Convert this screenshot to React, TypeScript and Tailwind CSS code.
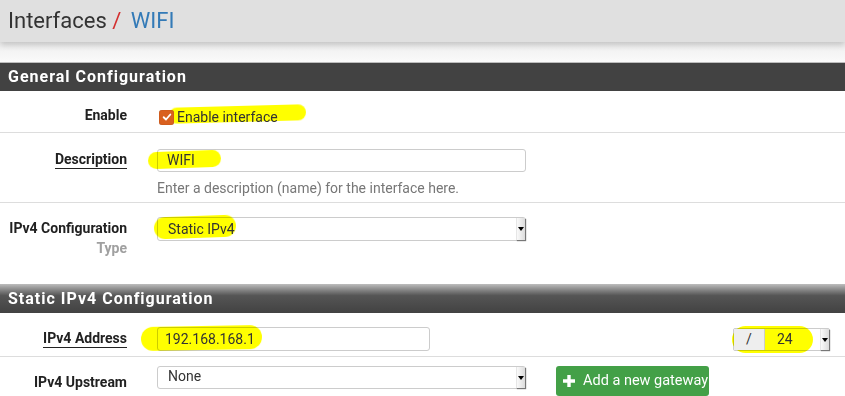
import React from "react";

const font = { fontFamily: "Roboto, 'Liberation Sans', sans-serif" };

function Mark({ className }: { className: string }) {
  return (
    <span
      className={`pointer-events-none absolute rounded-full bg-[#ffff00] mix-blend-multiply blur-[0.6px] ${className}`}
    />
  );
}

function SelectArrow() {
  return (
    <span className="absolute right-0 top-0 flex h-full w-[9px] items-center justify-center border-l border-[#e6e6e6] bg-gradient-to-r from-[#fafafa] to-[#dcdcdc] shadow-[1px_1px_1px_#777]">
      <span className="h-0 w-0 border-x-[3px] border-t-[4px] border-x-transparent border-t-black" />
    </span>
  );
}

function Heading({ title, gradient }: { title: string; gradient?: boolean }) {
  return (
    <div
      className={`h-[29px] px-2 flex items-center text-[16px] font-bold tracking-[1px] text-white ${
        gradient
          ? "bg-gradient-to-b from-[#bdbdbd] via-[#555] via-40% to-[#424242]"
          : "bg-[#424242] border-t border-[#bdbdbd]"
      }`}
    >
      {title}
    </div>
  );
}

export default function App() {
  return (
    <div className="relative w-[845px] h-[396px] overflow-hidden bg-white text-[14px] text-[#212121]" style={font}>
      {/* Breadcrumb bar */}
      <div className="h-[42px] bg-[#e0e0e0] px-2 flex items-center shadow-[0_3px_6px_rgba(0,0,0,0.18)] relative z-10">
        <h1 className="text-[22px] leading-none">
          <span className="text-[#333]">Interfaces</span>
          <span className="text-[#d32f2f]"> / </span>
          <span className="text-[#337ab7] ml-1">WIFI</span>
        </h1>
      </div>
      <div className="h-[20px] bg-gradient-to-b from-[#eeeeee] to-[#fafafa]" />

      <Heading title="General Configuration" />

      {/* Enable */}
      <div className="flex h-[42px] items-center border-b border-[#ddd]">
        <div className="w-[127px] text-right font-bold pt-[8px]">Enable</div>
        <div className="relative ml-[32px] flex items-center gap-[3px] pt-[11px]">
          <Mark className="left-[10px] top-[10px] h-[16px] w-[137px] rotate-[-1.5deg]" />
          <span className="relative flex h-[15px] w-[15px] items-center justify-center rounded-[3px] bg-[#d9601f] shadow-[inset_0_0_1px_#8a3a10]">
            <svg viewBox="0 0 12 12" className="h-[10px] w-[10px]">
              <path d="M2 6.3 L4.8 9 L10 3" fill="none" stroke="white" strokeWidth="2.2" strokeLinecap="round" strokeLinejoin="round" />
            </svg>
          </span>
          <span className="relative text-[14px] text-[#333]">Enable interface</span>
        </div>
      </div>

      {/* Description */}
      <div className="flex h-[70px] border-b border-[#ddd] pt-[16px]">
        <div className="w-[127px] text-right">
          <span className="font-bold border-b border-[#222] leading-[18px] inline-block">Description</span>
        </div>
        <div className="ml-[30px] flex flex-col">
          <div className="relative h-[23px] w-[369px] rounded-[3px] border border-[#ccc] px-[9px] flex items-center text-[#333]">
            <Mark className="left-[-10px] top-[1px] h-[17px] w-[73px] rotate-[-2deg]" />
            <span className="relative">WIFI</span>
          </div>
          <div className="mt-[6px] text-[14px] text-[#777]">Enter a description (name) for the interface here.</div>
        </div>
      </div>

      {/* IPv4 Configuration Type */}
      <div className="flex h-[81px] pt-[14px]">
        <div className="w-[127px] text-right font-bold leading-[20px] pt-[1px]">
          IPv4 Configuration
          <div className="text-[#a0a0a0]">Type</div>
        </div>
        <div className="ml-[30px]">
          <div className="relative h-[24px] w-[369px] rounded-[3px] border border-[#ccc] pl-[10px] flex items-center text-[#333]">
            <Mark className="left-[-4px] top-[-2px] h-[22px] w-[82px] rotate-[-2deg]" />
            <span className="relative">Static IPv4</span>
            <SelectArrow />
          </div>
        </div>
      </div>

      <Heading title="Static IPv4 Configuration" gradient />

      {/* IPv4 Address */}
      <div className="flex h-[44px] items-start border-b border-[#ddd] pt-[14px]">
        <div className="w-[127px] text-right pt-[1px]">
          <span className="font-bold border-b border-[#222] leading-[18px] inline-block">IPv4 Address</span>
        </div>
        <div className="ml-[30px] relative h-[24px] w-[273px] rounded-[3px] border border-[#ccc] pl-[7px] flex items-center text-[#333]">
          <Mark className="left-[-17px] top-[-2px] h-[24px] w-[121px] rotate-[-1deg]" />
          <span className="relative">192.168.168.1</span>
        </div>
        <div className="ml-auto mr-[15px] mt-[1px] relative flex h-[23px] w-[97px] rounded-[2px] border border-[#ccc] text-[#333]">
          <Mark className="left-[-2px] top-[-3px] h-[27px] w-[81px]" />
          <span className="relative w-[31px] bg-[#eee] border-r border-[#ccc] flex items-center justify-center">/</span>
          <span className="relative pl-[12px] flex items-center">24</span>
          <SelectArrow />
        </div>
      </div>

      {/* IPv4 Upstream */}
      <div className="flex h-[40px] items-start pt-[9px]">
        <div className="w-[127px] text-right font-bold pt-[6px]">IPv4 Upstream</div>
        <div className="ml-[30px] relative h-[23px] w-[369px] rounded-[3px] border border-[#ccc] pl-[10px] flex items-center text-[#333] pb-[3px]">
          None
          <SelectArrow />
        </div>
        <button className="ml-[30px] flex h-[30px] w-[153px] items-center gap-[7px] rounded-[3px] bg-[#43a047] pl-[6px] text-[14.5px] text-white">
          <svg viewBox="0 0 14 14" className="h-[14px] w-[14px]">
            <path d="M7 1 V13 M1 7 H13" stroke="white" strokeWidth="3.4" />
          </svg>
          Add a new gateway
        </button>
      </div>
    </div>
  );
}
